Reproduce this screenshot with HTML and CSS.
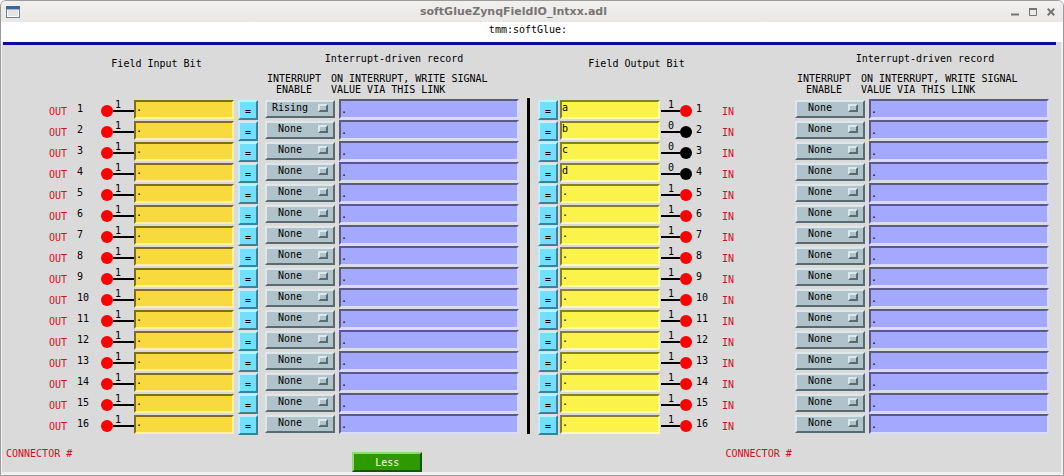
FILE: index.html
```html
<!DOCTYPE html>
<html lang="en">
<head>
<meta charset="utf-8">
<title>softGlueZynqFieldIO_Intxx.adl</title>
<link rel="stylesheet" href="styles.css">
</head>
<body>
<div class="window">
  <header class="titlebar">
    <svg class="app-icon" width="14" height="12" viewBox="0 0 14 12" aria-hidden="true">
      <rect x="0.5" y="0.5" width="13" height="11" fill="#e4e4e1" stroke="#6f7f91"/>
      <rect x="0" y="0" width="14" height="3" fill="#3c6796"/>
      <rect x="1" y="3" width="12" height="1" fill="#9db8d2"/>
      <path d="M1.500 4v6.500h11V4" fill="none" stroke="#fff"/>
    </svg>
    <h1 class="title">softGlueZynqFieldIO_Intxx.adl</h1>
    <div class="window-controls">
      <button class="window-button" type="button" aria-label="Minimize"><svg width="8" height="8" viewBox="0 0 8 8"><path d="M0 6.500h8" stroke="#777573" stroke-width="2"/></svg></button>
      <button class="window-button" type="button" aria-label="Maximize"><svg width="8" height="8" viewBox="0 0 8 8"><path d="M.5 0v7.500h7V0" fill="none" stroke="#777573"/><path d="M0 1h8" stroke="#777573" stroke-width="2"/></svg></button>
      <button class="window-button" type="button" aria-label="Close"><svg width="8" height="8" viewBox="0 0 8 8"><path d="M.7.7l6.600 6.600M7.300.7L.7 7.300" stroke="#777573" stroke-width="2"/></svg></button>
    </div>
  </header>
  <div class="prefix">tmm:softGlue:</div>
  <main class="content">
    <div class="panels">
      <section class="panel">
        <div class="heads heads-in">
          <h2 class="bit-title">Field Input Bit</h2>
          <div class="record">
            <h2 class="record-title">Interrupt-driven record</h2>
            <div class="enable-title">INTERRUPT<br>ENABLE</div>
            <div class="link-title">ON INTERRUPT, WRITE SIGNAL<br>VALUE VIA THIS LINK</div>
          </div>
        </div>
        <div class="rows" id="inputs"></div>
      </section>
      <div class="divider"></div>
      <section class="panel panel-out">
        <div class="heads heads-out">
          <h2 class="bit-title">Field Output Bit</h2>
          <div class="record">
            <h2 class="record-title">Interrupt-driven record</h2>
            <div class="enable-title">INTERRUPT<br>ENABLE</div>
            <div class="link-title">ON INTERRUPT, WRITE SIGNAL<br>VALUE VIA THIS LINK</div>
          </div>
        </div>
        <div class="rows" id="outputs"></div>
      </section>
    </div>
    <footer class="footer">
      <div class="footer-half"><span class="connector">CONNECTOR #</span><button class="less" type="button">Less</button></div>
      <div class="footer-half"><span class="connector connector-out">CONNECTOR #</span></div>
    </footer>
  </main>
</div>
<script src="rows.js"></script>
</body>
</html>
```
FILE: styles.css
```css
*, *::before, *::after { box-sizing: border-box; }

body {
  margin: 0;
  background: #fff;
  color: #000;
  font: 10px/11px "DejaVu Sans Mono", monospace;
}

button, input, select { margin: 0; font: inherit; color: inherit; border-radius: 0; }
h1, h2 { margin: 0; font: inherit; }

.window {
  display: flex;
  flex-direction: column;
  min-height: 100vh;
  border: 1px solid #9c9c9c;
  border-radius: 6px 6px 0 0;
  background: #f0f0ef;
  overflow: hidden;
}

.titlebar {
  display: flex;
  align-items: center;
  height: 21px;
  padding: 0 8px 0 5px;
  background: linear-gradient(#f1f0ef, #e9e8e7);
}

.app-icon { flex: none; }

.title {
  flex: 1;
  padding-right: 4px;
  text-align: center;
  font: bold 11px/20px "DejaVu Sans", sans-serif;
  color: #777573;
}

.window-controls { display: flex; gap: 10px; }
.window-button { display: flex; padding: 0; border: 0; background: none; }

.prefix {
  height: 20px;
  padding-top: 2px;
  padding-right: 8px;
  background: #fff;
  text-align: center;
}

.content {
  flex: 1;
  display: flex;
  flex-direction: column;
  justify-content: space-between;
  margin: 0 2px 3px 1px;
  background: #dadada;
}

.content::before {
  content: "";
  height: 3px;
  margin: 0 5px 0 1px;
  background: #0c0c9e;
}

.panels { display: flex; flex: 1; }
.panel { flex: 1 1 0; min-width: 0; }
.panel-out { flex-basis: 6px; }
.divider { flex: none; width: 3px; height: 336px; margin: 53px 8px 0; background: #000; }

.heads { display: grid; height: 54px; }
.heads-in { grid-template-columns: 263px 1fr; }
.heads-out { grid-template-columns: 257px 1fr; padding-right: 10px; }
.bit-title { padding-top: 13px; text-align: center; }
.heads-in .bit-title { padding-left: 46px; }
.heads-out .bit-title { padding-right: 60px; }

.record {
  display: grid;
  grid-template-columns: 58px 1fr;
  grid-template-rows: 20px 22px;
  column-gap: 8px;
  padding-top: 8px;
  white-space: nowrap;
}

.record-title { grid-column: 1 / 3; padding-left: 4px; text-align: center; }
.enable-title { text-align: center; }

.row { display: grid; height: 21px; }
.row-in { grid-template-columns: 47px 28px 24px 12px 21px 100px 4px 20px 7px 70px 4px 1fr; }
.row-out { grid-template-columns: 20px 2px 100px 1px 19px 12px 4px 26px 73px 70px 4px 1fr; padding-right: 12px; }

.side { padding-top: 7px; color: #d0101c; }
.row-in .side { grid-column: 2; }
.number { padding-top: 4px; }
.lamp { width: 12px; height: 12px; margin-top: 6px; border-radius: 50%; background: #f00; }
.lamp-off { background: #000; }
.wire { height: 13px; padding-left: 2px; border-bottom: 2px solid #000; }
.row-out .wire { padding-left: 7px; }

.field, .link {
  width: 100%;
  min-width: 0;
  padding: 0;
  border: 2px solid;
  outline: 0;
}

.field { height: 19px; margin-top: 1px; padding-bottom: 4px; }
.row-in .field { background: #f8d93e; border-color: #806c1b #fff0a3 #fff0a3 #806c1b; }
.row-out .field { background: #fbf24a; border-color: #858023 #fffbb0 #fffbb0 #858023; }

.link {
  height: 20px;
  background: #a5a8ff;
  border-color: #595a88 #dadbfa #dadbfa #595a88;
}

.equals {
  height: 20px;
  margin-top: 1px;
  padding: 2px 0 0;
  border: 2px solid;
  border-color: #bdf3ff #407f98 #407f98 #bdf3ff;
  background: #73dfff;
}

.enable { position: relative; height: 18px; margin-top: 1px; }

.enable-select {
  appearance: none;
  width: 100%;
  height: 18px;
  padding: 0 20px 3px 0;
  border: 2px solid;
  border-color: #dce8ec #596b71 #596b71 #dce8ec;
  background: #b0c3ca;
  text-align: center;
  text-align-last: center;
}

.enable::after {
  content: "";
  position: absolute;
  right: 7px;
  top: 4px;
  width: 10px;
  height: 8px;
  border: 2px solid;
  border-color: #dce8ec #596b71 #596b71 #dce8ec;
  background: #b0c3ca;
  pointer-events: none;
}

.footer { display: flex; height: 24px; }
.footer-half { flex: 1 1 0; display: flex; align-items: flex-start; padding-left: 4px; }
.connector { flex: none; color: #d0101c; }
.connector-out { margin-left: 190px; }

.less {
  width: 70px;
  height: 20px;
  margin-left: 280px;
  margin-top: 4px;
  padding: 0;
  border: 2px solid;
  border-color: #94d67a #1a5200 #1a5200 #94d67a;
  background: #2f9900;
  color: #f4ffe9;
}
```
FILE: rows.js
```js
const names = ["a", "b", "c", "d"];

function enable(label, value) {
  return `<div class="enable"><select class="enable-select" aria-label="${label} interrupt enable">
    ${["None", "Rising", "Falling", "Both"].map(o => `<option${o === value ? " selected" : ""}>${o}</option>`).join("")}
  </select></div><span></span><input class="link" value="." aria-label="${label} link">`;
}

function inputRow(n) {
  const label = "Input " + n;
  return `<div class="row row-in"><span class="side">OUT</span><span class="number">${n}</span>
    <span class="lamp"></span><span class="wire">1</span>
    <input class="field" value="." aria-label="${label}"><span></span>
    <button class="equals" type="button">=</button><span></span>
    ${enable(label, n === 1 ? "Rising" : "None")}</div>`;
}

function outputRow(n) {
  const label = "Output " + n;
  const off = n >= 2 && n <= 4;
  return `<div class="row row-out"><button class="equals" type="button">=</button><span></span>
    <input class="field" value="${names[n - 1] || "."}" aria-label="${label}"><span></span>
    <span class="wire">${off ? 0 : 1}</span><span class="lamp${off ? " lamp-off" : ""}"></span><span></span>
    <span class="number">${n}</span><span class="side">IN</span>
    ${enable(label, "None")}</div>`;
}

const numbers = Array.from({ length: 16 }, (_, i) => i + 1);
document.getElementById("inputs").innerHTML = numbers.map(inputRow).join("");
document.getElementById("outputs").innerHTML = numbers.map(outputRow).join("");
```
